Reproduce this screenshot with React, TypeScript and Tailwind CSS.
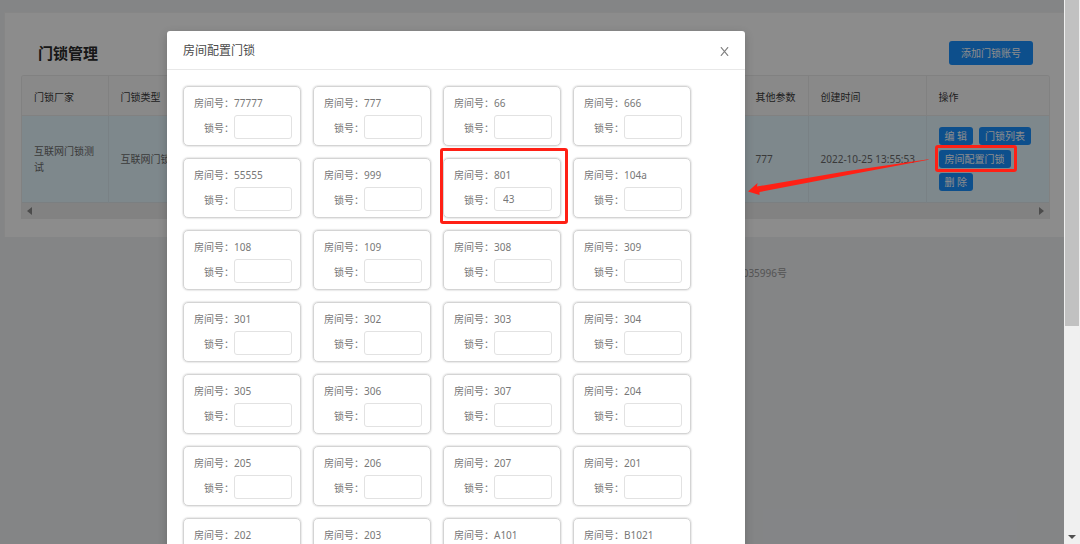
import { useState } from "react";

type Room = { no: string; lock?: string; marked?: boolean };

const ROOMS: Room[] = [
  { no: "77777" },
  { no: "777" },
  { no: "66" },
  { no: "666" },
  { no: "55555" },
  { no: "999" },
  { no: "801", lock: "43", marked: true },
  { no: "104a" },
  { no: "108" },
  { no: "109" },
  { no: "308" },
  { no: "309" },
  { no: "301" },
  { no: "302" },
  { no: "303" },
  { no: "304" },
  { no: "305" },
  { no: "306" },
  { no: "307" },
  { no: "204" },
  { no: "205" },
  { no: "206" },
  { no: "207" },
  { no: "201" },
  { no: "202" },
  { no: "203" },
  { no: "A101" },
  { no: "B1021" },
];

const smallButton =
  "h-[18px] rounded-[3px] bg-[#1890ff] px-[6px] text-[10px] leading-[18px] text-white whitespace-nowrap";

function RoomCard({ room }: { room: Room }) {
  const [lock, setLock] = useState(room.lock ?? "");
  const id = `lock-${room.no}`;

  return (
    <div className="relative w-[118px] rounded-[5px] border border-[#d4d4d4] px-[10px] pt-2 pb-[6px] shadow-[0_0_2px_#b8b8b8]">
      <div className="flex h-4 items-center">
        <span className="w-10 shrink-0 text-right">房间号：</span>
        <span>{room.no}</span>
      </div>
      <div className="mt-1 flex h-6 items-center">
        <label htmlFor={id} className="w-10 shrink-0 pt-px text-right">
          锁号：
        </label>
        <input
          id={id}
          value={lock}
          onChange={(e) => setLock(e.target.value)}
          className="h-6 w-[58px] shrink-0 rounded-[3px] border border-[#e2e2e2] bg-white px-2 outline-none"
        />
      </div>
      {room.marked && (
        <span className="pointer-events-none absolute -top-[11px] -right-2 -bottom-[7px] -left-1 rounded-[3px] border-3 border-[#ff2015]" />
      )}
    </div>
  );
}

function LockTable() {
  return (
    <div className="overflow-hidden rounded-t-[3px] border-x border-t border-[#ececec]">
      <table className="w-full table-fixed border-collapse text-left">
        <colgroup>
          <col className="w-[86px]" />
          <col className="w-[118px]" />
          <col />
          <col className="w-[65px]" />
          <col className="w-[118px]" />
          <col className="w-[123px]" />
        </colgroup>
        <thead className="bg-[#fafafa] text-[#3a3a3a]">
          <tr className="h-[39px] border-b border-[#ececec]">
            <th className="border-r border-[#ececec] px-3 pt-1 font-normal">门锁厂家</th>
            <th className="border-r border-[#ececec] px-3 pt-1 font-normal">门锁类型</th>
            <th className="border-r border-[#ececec]" />
            <th className="border-r border-[#ececec] pt-1 pl-3 font-normal whitespace-nowrap">其他参数</th>
            <th className="border-r border-[#ececec] px-3 pt-1 font-normal">创建时间</th>
            <th className="px-3 pt-1 font-normal">操作</th>
          </tr>
        </thead>
        <tbody className="bg-[#e6f7ff] text-[#6b6b6b]">
          <tr className="border-b border-[#e0e8ec]">
            <td className="border-r border-[#dcebf2] px-3 leading-4">互联网门锁测试</td>
            <td className="border-r border-[#dcebf2] px-3">互联网门锁</td>
            <td className="border-r border-[#dcebf2]" />
            <td className="border-r border-[#dcebf2] px-3">777</td>
            <td className="border-r border-[#dcebf2] pl-3 whitespace-nowrap">2022-10-25 13:55:53</td>
            <td className="px-3 py-[11px]">
              <div className="flex flex-wrap gap-x-[6px] gap-y-[5px]">
                <button className={smallButton}>编 辑</button>
                <button className={smallButton}>门锁列表</button>
                <span className="relative flex">
                  <button className={smallButton}>房间配置门锁</button>
                  <span className="pointer-events-none absolute -top-[5px] -right-[6px] -bottom-1 -left-1 z-20 rounded-[3px] border-3 border-[#ff2015]" />
                </span>
                <button className={smallButton}>删 除</button>
              </div>
            </td>
          </tr>
        </tbody>
      </table>
      <div className="flex h-4 items-center justify-between bg-[#ededed] px-[5px]">
        <svg width="5" height="8" viewBox="0 0 5 8" fill="#8a8a8a">
          <path d="M5 0v8L0 4z" />
        </svg>
        <svg width="5" height="8" viewBox="0 0 5 8" fill="#8a8a8a">
          <path d="M0 0v8l5-4z" />
        </svg>
      </div>
    </div>
  );
}

function LockModal() {
  return (
    <div
      role="dialog"
      aria-labelledby="modal-title"
      className="h-[600px] w-[578px] shrink-0 rounded-t-[3px] bg-white shadow-[0_3px_10px_rgba(0,0,0,0.2)]"
    >
      <div className="flex h-[39px] items-center justify-between border-b border-[#e8e8e8] px-4 pt-0.5">
        <h2 id="modal-title" className="text-xs text-[#4a4a4a]">
          房间配置门锁
        </h2>
        <button aria-label="关闭" className="flex size-[9px]">
          <svg width="9" height="9" viewBox="0 0 9 9" stroke="#808080" strokeWidth="1.2" fill="none">
            <path d="M.9.2l7.2 8.6M8.1.2L.9 8.8" />
          </svg>
        </button>
      </div>
      <div className="flex flex-wrap gap-3 p-4 text-[#777]">
        {ROOMS.map((room) => (
          <RoomCard key={room.no} room={room} />
        ))}
      </div>
    </div>
  );
}

export default function App() {
  return (
    <div className="flex h-screen overflow-hidden bg-[#f0f2f5] font-['Noto_Sans','Noto_Sans_CJK_SC',sans-serif] text-[10px] leading-4">
      <main className="relative min-w-0 flex-1 overflow-hidden pt-3 pl-1">
        <section className="border-t border-l border-[#f4f4f4] bg-white pt-7 pr-[14px] pb-[18px] pl-4">
          <div className="mb-[10px] flex h-6 items-center justify-between px-[17px]">
            <h1 className="text-[15px] font-bold text-[#2a2a2a]">门锁管理</h1>
            <button className="h-6 rounded-[3px] bg-[#1890ff] px-3 text-white">添加门锁账号</button>
          </div>
          <LockTable />
        </section>
        <footer className="flex justify-end pt-7 pr-[277px] text-[#999]">035996号</footer>

        <div className="absolute inset-0 z-10 bg-black/45 pt-[31px] pl-[167px]">
          <LockModal />
        </div>

        {/* 指向弹窗的箭头 */}
        <svg
          className="pointer-events-none absolute top-[158px] left-[748px] z-20"
          width="181"
          height="38"
          viewBox="0 0 181 38"
          fill="#ff2015"
        >
          <path d="M0 33.5L9.5 25L9 28.5L100 13L180.5 1.2L180.5 1.8L105 16L11.5 34L11.5 37Z" />
        </svg>
      </main>

      <div className="flex w-4 shrink-0 flex-col items-center justify-between bg-[#f0f0f0]">
        <div className="h-[60%] w-[14px] bg-[#c1c1c1]" />
        <svg className="mb-[5px]" width="8" height="4" viewBox="0 0 8 4" fill="#505050">
          <path d="M0 0h8L4 4z" />
        </svg>
      </div>
    </div>
  );
}
